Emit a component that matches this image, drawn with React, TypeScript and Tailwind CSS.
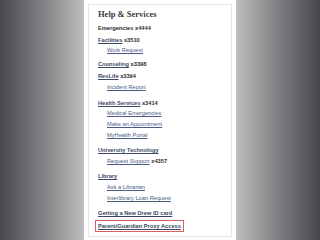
import React from 'react';

type Row = {
  kind: 'head' | 'item';
  link?: string;
  plain?: string;
  mt: string;
};

const rows: Row[] = [
  { kind: 'head', plain: 'Emergencies x4444', mt: 'mt-[3px]' },
  { kind: 'head', link: 'Facilities', plain: ' x3510', mt: 'mt-[2px]' },
  { kind: 'item', link: 'Work Request', mt: 'mt-0' },
  { kind: 'head', link: 'Counseling', plain: ' x3398', mt: 'mt-[4px]' },
  { kind: 'head', link: 'ResLife', plain: ' x3394', mt: 'mt-[2px]' },
  { kind: 'item', link: 'Incident Report', mt: 'mt-px' },
  { kind: 'head', link: 'Health Services', plain: ' x3414', mt: 'mt-[6px]' },
  { kind: 'item', link: 'Medical Emergencies', mt: 'mt-0' },
  { kind: 'item', link: 'Make an Appointment', mt: 'mt-px' },
  { kind: 'item', link: 'MyHealth Portal', mt: 'mt-px' },
  { kind: 'head', link: 'University Technology', mt: 'mt-[5px]' },
  { kind: 'item', link: 'Request Support', plain: ' x4357', mt: 'mt-px' },
  { kind: 'head', link: 'Library', mt: 'mt-[5px]' },
  { kind: 'item', link: 'Ask a Librarian', mt: 'mt-px' },
  { kind: 'item', link: 'Interlibrary Loan Request', mt: 'mt-px' },
  { kind: 'head', link: 'Getting a New Drew ID card', mt: 'mt-[5px]' },
];

export default function App() {
  return (
    <div className="flex h-[240px] w-[320px] overflow-hidden font-['Liberation_Sans',Arial,sans-serif]">
      {/* left vignette */}
      <div className="h-full w-[84px] bg-gradient-to-r from-[#47474d] to-[#bfbfc0]" />

      {/* page column */}
      <div className="h-full w-[152px] bg-white px-[4px] pt-[4px]">
        <div className="h-[233px] border border-[#e4e4e4] bg-white pl-[9px] pt-[3px]">
          <div className="h-[12px] font-['Liberation_Serif',serif] text-[8.5px] font-bold leading-[12px] text-[#3a3a3a]">
            Help &amp; Services
          </div>

          {rows.map((r, i) => (
            <div
              key={i}
              className={`${r.mt} h-[10px] whitespace-nowrap text-[5.7px] leading-[10px] ${
                r.kind === 'item' ? 'pl-[9px]' : ''
              }`}
            >
              {r.link && (
                <span
                  className={`underline decoration-[0.5px] underline-offset-[1px] ${
                    r.kind === 'head' ? 'font-bold text-[#3b4868]' : 'text-[#4a5a86]'
                  }`}
                >
                  {r.link}
                </span>
              )}
              {r.plain && <span className="font-bold text-[#2e2e2e]">{r.plain}</span>}
            </div>
          ))}

          {/* highlighted row */}
          <div className="mt-[2px] flex">
            <div className="-ml-[3px] flex h-[12px] items-center whitespace-nowrap border border-[#d65f5f] px-[2px] text-[5.7px] font-bold leading-[10px]">
              <span className="text-[#3b4868] underline decoration-[0.5px] underline-offset-[1px]">
                Parent/Guardian Proxy Access
              </span>
            </div>
          </div>
        </div>
      </div>

      {/* right vignette */}
      <div className="h-full flex-1 bg-gradient-to-r from-[#bdbdbe] to-[#46464c]" />
    </div>
  );
}
